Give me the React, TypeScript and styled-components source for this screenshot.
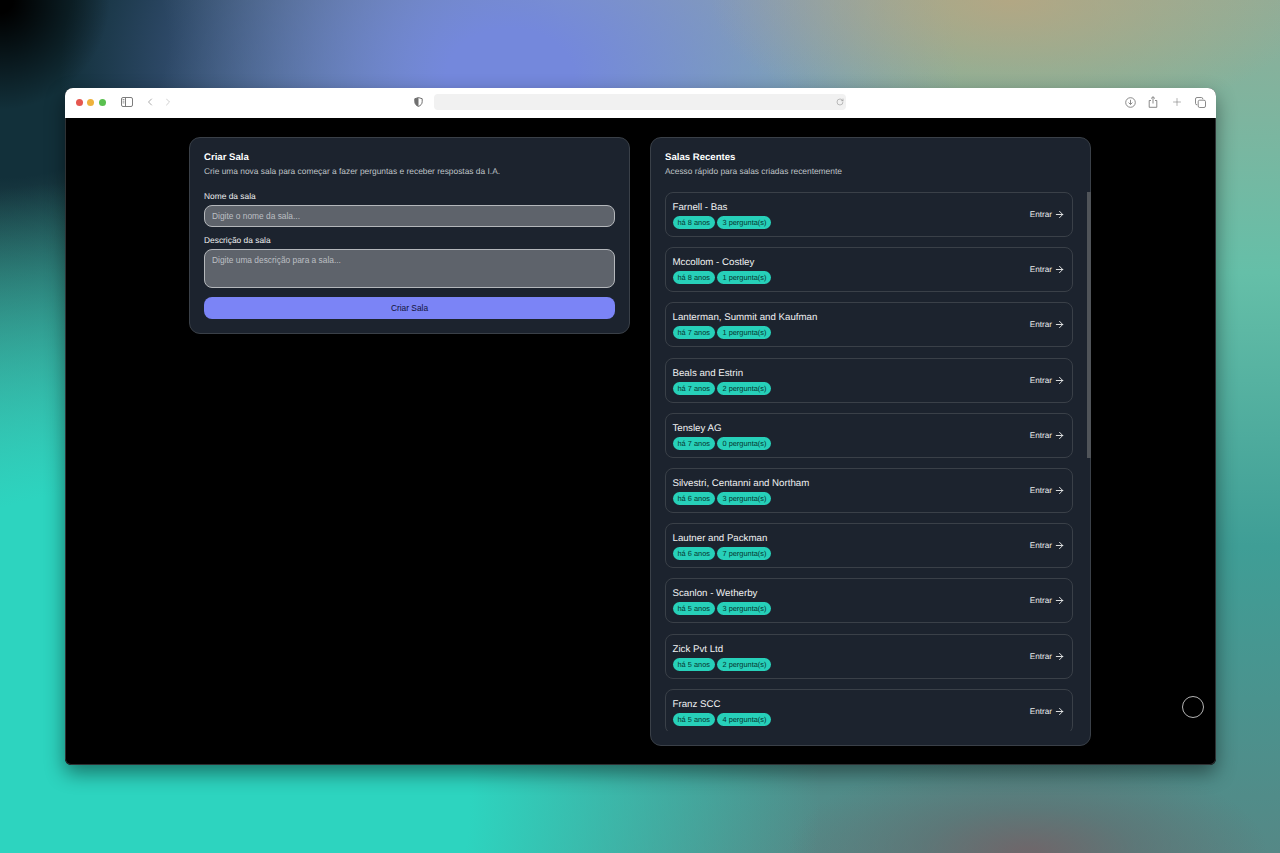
import React from "react";
import styled, { createGlobalStyle } from "styled-components";
import { ArrowRight, ChevronLeft, ChevronRight, Plus, RotateCw } from "lucide-react";

const Global = createGlobalStyle`
  html, body { margin: 0; padding: 0; height: 100%; }
  body {
    font-family: "Liberation Sans", Arial, sans-serif;
    background: #000;
    overflow: hidden;
    text-rendering: geometricPrecision;
  }
  * { box-sizing: border-box; }
`;

const Desktop = styled.div`
  width: 1280px;
  height: 853px;
  padding: 88px 64px 88px 65px;
  background:
    radial-gradient(ellipse 110px 110px at 0px 0px, #000 12%, rgba(0,0,0,0) 100%),
    radial-gradient(ellipse 300px 130px at 1010px 0px, rgba(190,165,125,0.75), rgba(190,165,125,0) 100%),
    radial-gradient(ellipse 240px 100px at 1028px 853px, rgba(112,100,104,0.9) 5%, rgba(100,105,108,0.55) 45%, rgba(100,105,108,0) 100%),
    radial-gradient(ellipse 450px 330px at 510px 75px, #7488dc 14%, rgba(116,136,220,0) 100%),
    radial-gradient(ellipse 700px 620px at 120px 800px, #2dd4bf 50%, rgba(45,212,191,0) 100%),
    radial-gradient(ellipse 560px 460px at 0px 40px, #12303a 30%, rgba(18,48,58,0) 100%),
    linear-gradient(180deg, #90ad98 0%, #65bfa8 32%, #3f9e96 64%, #558886 100%);
`;

const Window = styled.div`
  position: relative;
  width: 1151px;
  height: 677px;
  border-radius: 8px 8px 6px 6px;
  overflow: hidden;
  background: #000;
  box-shadow: 0 8px 20px rgba(0, 0, 0, 0.45);
  display: flex;
  flex-direction: column;
`;

const Toolbar = styled.div`
  height: 30px;
  flex: none;
  background: #fff;
  display: flex;
  align-items: center;
  padding: 0 0 2px 11px;
  color: #7d7d7d;
`;

const Lights = styled.div`
  display: flex;
  gap: 4.3px;
  margin-right: 15px;
`;

const Light = styled.span<{ $c: string }>`
  width: 7px;
  height: 7px;
  border-radius: 50%;
  background: ${(p) => p.$c};
`;

const IconSlot = styled.span<{ $w: number; $o?: number }>`
  display: flex;
  align-items: center;
  justify-content: center;
  flex: none;
  width: ${(p) => p.$w}px;
  opacity: ${(p) => p.$o ?? 1};
`;

const Nav = styled.div`
  display: flex;
  align-items: center;
  gap: 6.2px;
  margin-left: 11px;
`;

const Shield = styled(IconSlot)`
  margin-left: 240px;
`;

const Address = styled.div`
  width: 412px;
  height: 15.5px;
  margin-left: 10.8px;
  background: #f1f1f1;
  border-radius: 4px;
  display: flex;
  align-items: center;
  justify-content: flex-end;
  padding-right: 2px;
  color: #8a8a8a;
`;

const Actions = styled.div`
  margin-left: auto;
  display: flex;
  align-items: center;
  gap: 11.3px;
  padding-right: 10px;
`;

const Page = styled.div`
  flex: 1;
  min-height: 0;
  padding: 19px 123px;
  border: 1px solid #2e3133;
  border-top: none;
  border-radius: 0 0 6px 6px;
  display: grid;
  grid-template-columns: 441px 441px;
  gap: 20px;
  align-items: start;
`;

const Card = styled.section<{ $fill?: boolean }>`
  position: relative;
  background: #1c232e;
  border: 1px solid #3a4048;
  border-radius: 11px;
  padding: 14px 14px 14px;
  height: ${(p) => (p.$fill ? "609px" : "197px")};
  display: flex;
  flex-direction: column;
`;

const Title = styled.h2`
  margin: 0;
  font-size: 9.6px;
  line-height: 12px;
  font-weight: 700;
  color: #fff;
`;

const Subtitle = styled.p`
  margin: 1px 0 0;
  font-size: 8.4px;
  line-height: 12px;
  color: #bfc2c6;
`;

const Label = styled.label`
  display: block;
  font-size: 8.4px;
  line-height: 11px;
  color: #eceded;
  margin-bottom: 3px;
`;

const Field = styled.div`
  margin-top: 14px;
  & + & { margin-top: 8px; }
`;

const inputCss = `
  display: block;
  width: 100%;
  background: #5e636b;
  border: 1px solid #b4b7bb;
  border-radius: 8px;
  color: #fff;
  font-family: inherit;
  font-size: 8.4px;
  outline: none;
  padding: 0 7px;
  &::placeholder { color: #bcbfc3; opacity: 1; }
`;

const Input = styled.input`
  ${inputCss}
  height: 22px;
`;

const Textarea = styled.textarea`
  ${inputCss}
  height: 38.5px;
  padding-top: 5px;
  line-height: 11px;
  resize: none;
`;

const Submit = styled.button`
  display: block;
  width: 100%;
  height: 21.5px;
  margin-top: 9.5px;
  border: none;
  border-radius: 8px;
  background: #7b84f6;
  color: #11123a;
  font-family: inherit;
  font-size: 8.4px;
`;

const List = styled.div`
  margin-top: 15px;
  height: 540px;
  margin-right: 3px;
  overflow: hidden;
  display: flex;
  flex-direction: column;
  gap: 10.2px;
`;

const Room = styled.article`
  flex: none;
  height: 45px;
  border: 1px solid #3a4048;
  border-radius: 8px;
  padding: 7px 7px 7px 6.5px;
  display: flex;
  align-items: center;
  justify-content: space-between;
`;

const RoomName = styled.div`
  font-size: 9.7px;
  line-height: 15px;
  color: #f0f1f2;
`;

const Badges = styled.div`
  display: flex;
  gap: 2.5px;
  margin-top: 1px;
`;

const Badge = styled.span`
  height: 13px;
  padding: 0 5px;
  border-radius: 7px;
  background: #27d0b9;
  color: #06352f;
  font-size: 7.4px;
  line-height: 13px;
  white-space: nowrap;
`;

const Enter = styled.span`
  display: flex;
  align-items: center;
  gap: 2px;
  font-size: 8.2px;
  color: #eceded;
`;

const Thumb = styled.div`
  position: absolute;
  right: -1px;
  top: 54px;
  width: 4px;
  height: 266px;
  background: #505459;
`;

const Fab = styled.div`
  position: absolute;
  right: 12px;
  bottom: 47px;
  width: 22px;
  height: 22px;
  border: 1px solid #b4b4b4;
  border-radius: 50%;
`;

const rooms: [string, string, string][] = [
  ["Farnell - Bas", "há 8 anos", "3 pergunta(s)"],
  ["Mccollom - Costley", "há 8 anos", "1 pergunta(s)"],
  ["Lanterman, Summit and Kaufman", "há 7 anos", "1 pergunta(s)"],
  ["Beals and Estrin", "há 7 anos", "2 pergunta(s)"],
  ["Tensley AG", "há 7 anos", "0 pergunta(s)"],
  ["Silvestri, Centanni and Northam", "há 6 anos", "3 pergunta(s)"],
  ["Lautner and Packman", "há 6 anos", "7 pergunta(s)"],
  ["Scanlon - Wetherby", "há 5 anos", "3 pergunta(s)"],
  ["Zick Pvt Ltd", "há 5 anos", "2 pergunta(s)"],
  ["Franz SCC", "há 5 anos", "4 pergunta(s)"],
];

const Sidebar = () => (
  <svg width="12" height="10" viewBox="0 0 12 10" fill="none" stroke="currentColor" strokeWidth="1">
    <rect x="0.5" y="0.5" width="11" height="9" rx="1.5" />
    <path d="M4.5 .5v9" />
    <path d="M1.6 2.5h1.8M1.6 4.2h1.8M1.6 5.9h1.8" strokeWidth=".8" />
  </svg>
);

const ShieldIcon = () => (
  <svg width="9" height="10" viewBox="0 0 9 10">
    <path d="M4.5.6 8.2 1.7v3C8.2 7 6.6 8.6 4.5 9.4 2.4 8.6.8 7 .8 4.7v-3z" fill="none" stroke="#6f6f6f" strokeWidth="1" />
    <path d="M4.5.6 .8 1.7v3C.8 7 2.4 8.6 4.5 9.4z" fill="#6f6f6f" />
  </svg>
);

const DownloadIcon = () => (
  <svg width="11" height="11" viewBox="0 0 11 11" fill="none" stroke="currentColor" strokeWidth=".9">
    <circle cx="5.5" cy="5.5" r="4.8" />
    <path d="M5.5 2.8v4.6M3.6 5.6l1.9 1.9 1.9-1.9" />
  </svg>
);

const ShareIcon = () => (
  <svg width="10" height="12" viewBox="0 0 10 12" fill="none" stroke="currentColor" strokeWidth=".9">
    <path d="M3 4.5H1.2v6.800h7.600V4.5H7" />
    <path d="M5 7.5V.8M3 2.6 5 .7l2 1.900" />
  </svg>
);

const TabsIcon = () => (
  <svg width="11" height="11" viewBox="0 0 11 11" fill="none" stroke="currentColor" strokeWidth=".9">
    <rect x="3.2" y="3.2" width="7.3" height="7.3" rx="1.5" />
    <path d="M2.2 7.8H2A1.5 1.5 0 0 1 .5 6.3V2A1.5 1.5 0 0 1 2 .5h4.300A1.5 1.5 0 0 1 7.800 2v.2" />
  </svg>
);

export default function App() {
  return (
    <Desktop>
      <Global />
      <Window>
        <Toolbar>
          <Lights>
            <Light $c="#e5574f" />
            <Light $c="#eeb23c" />
            <Light $c="#5ac04f" />
          </Lights>
          <IconSlot $w={12}><Sidebar /></IconSlot>
          <Nav>
            <IconSlot $w={12}><ChevronLeft size={18} strokeWidth={1.3} /></IconSlot>
            <IconSlot $w={12} $o={0.55}><ChevronRight size={18} strokeWidth={1.3} /></IconSlot>
          </Nav>
          <Shield $w={9}><ShieldIcon /></Shield>
          <Address><RotateCw size={8} strokeWidth={1.6} /></Address>
          <Actions>
            <IconSlot $w={12}><DownloadIcon /></IconSlot>
            <IconSlot $w={12}><ShareIcon /></IconSlot>
            <IconSlot $w={12}><Plus size={12} strokeWidth={1.2} /></IconSlot>
            <IconSlot $w={12}><TabsIcon /></IconSlot>
          </Actions>
        </Toolbar>
        <Page>
          <Card>
            <Title>Criar Sala</Title>
            <Subtitle>Crie uma nova sala para começar a fazer perguntas e receber respostas da I.A.</Subtitle>
            <Field>
              <Label>Nome da sala</Label>
              <Input placeholder="Digite o nome da sala..." />
            </Field>
            <Field>
              <Label>Descrição da sala</Label>
              <Textarea placeholder="Digite uma descrição para a sala..." />
            </Field>
            <Submit>Criar Sala</Submit>
          </Card>
          <Card $fill>
            <Title>Salas Recentes</Title>
            <Subtitle>Acesso rápido para salas criadas recentemente</Subtitle>
            <List>
              {rooms.map(([name, age, count]) => (
                <Room key={name}>
                  <div>
                    <RoomName>{name}</RoomName>
                    <Badges>
                      <Badge>{age}</Badge>
                      <Badge>{count}</Badge>
                    </Badges>
                  </div>
                  <Enter>Entrar <ArrowRight size={11} strokeWidth={2} /></Enter>
                </Room>
              ))}
            </List>
            <Thumb />
          </Card>
        </Page>
        <Fab />
      </Window>
    </Desktop>
  );
}
